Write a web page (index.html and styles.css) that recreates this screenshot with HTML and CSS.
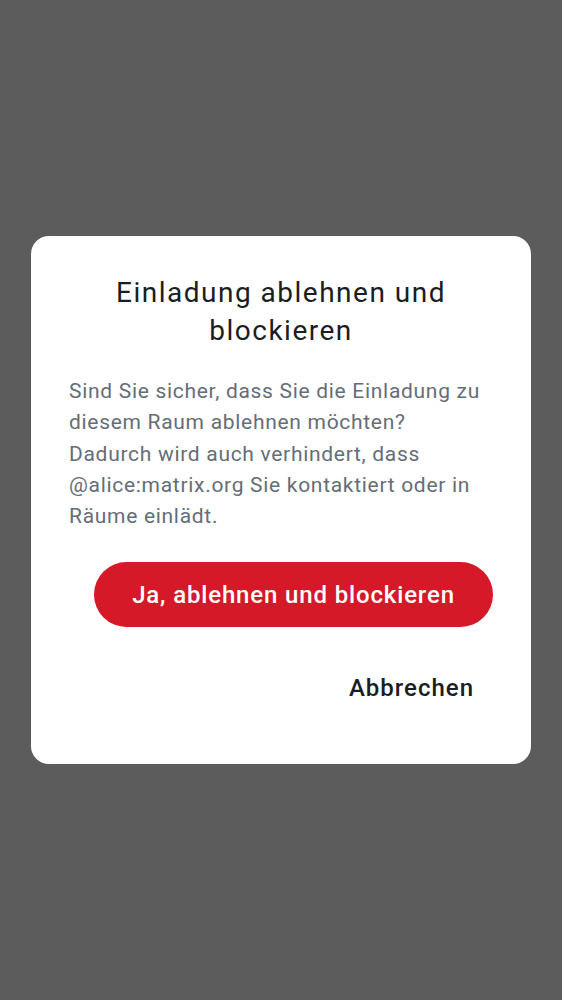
FILE: index.html
```html
<!DOCTYPE html>
<html lang="de">
<head>
<meta charset="utf-8">
<link rel="stylesheet" href="styles.css">
</head>
<body>
<div class="scrim">
  <div class="dialog">
    <h1 class="title">Einladung ablehnen und blockieren</h1>
    <p class="body">Sind Sie sicher, dass Sie die Einladung zu diesem Raum ablehnen möchten? Dadurch wird auch verhindert, dass @alice:matrix.org Sie kontaktiert oder in Räume einlädt.</p>
    <div class="actions">
      <button class="btn-primary">Ja, ablehnen und blockieren</button>
      <button class="btn-text">Abbrechen</button>
    </div>
  </div>
</div>
</body>
</html>
```

FILE: styles.css
```css
html, body {
  margin: 0;
  padding: 0;
}
body {
  font-family: Roboto, "Noto Sans", sans-serif;
  background: #5c5c5c;
}
.scrim {
  height: 1000px;
  display: flex;
  justify-content: center;
  align-items: flex-start;
}
.dialog {
  margin-top: 236px;
  width: 500px;
  box-sizing: border-box;
  background: #ffffff;
  border-radius: 18px;
  padding: 38px 38px 45px;
}
.title {
  margin: 0;
  font-size: 28px;
  line-height: 38px;
  font-weight: 400;
  letter-spacing: 1.5px;
  color: #1b1d22;
  text-align: center;
}
.body {
  margin: 26px 6px 0 0;
  font-size: 21px;
  line-height: 31.3px;
  letter-spacing: 0.7px;
  color: #656d77;
}
.actions {
  display: flex;
  flex-direction: column;
  align-items: flex-end;
  margin-top: 30px;
}
.btn-primary {
  height: 65px;
  width: 399px;
  border: none;
  border-radius: 33px;
  background: #d51928;
  color: #ffffff;
  font-family: Roboto, "Noto Sans", sans-serif;
  font-size: 24px;
  font-weight: 500;
  letter-spacing: 0.85px;
  padding: 0;
}
.btn-text {
  margin-top: 30px;
  height: 62px;
  border: none;
  background: transparent;
  color: #1b1d22;
  font-family: Roboto, "Noto Sans", sans-serif;
  font-size: 24px;
  font-weight: 500;
  letter-spacing: 1px;
  padding: 0 19px 0 20px;
}
```
